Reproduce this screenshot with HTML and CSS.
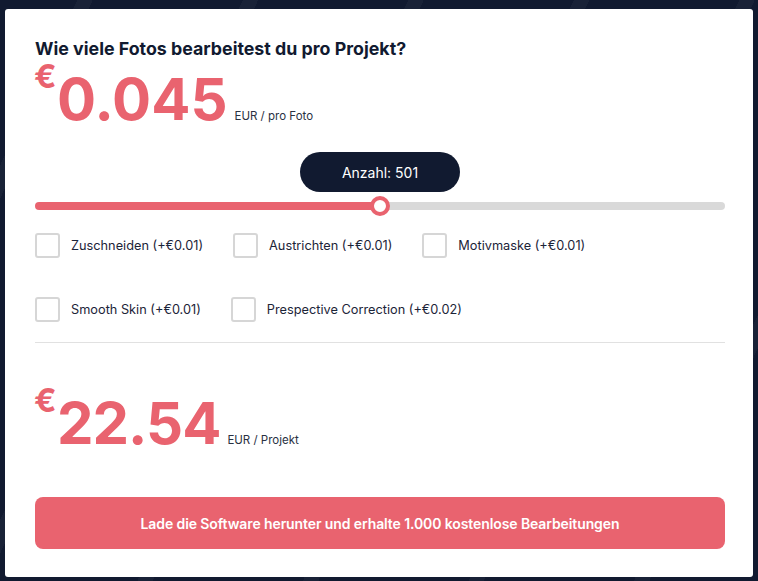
FILE: index.html
```html
<!DOCTYPE html>
<html lang="de">
<head>
<meta charset="utf-8">
<title>Preisrechner</title>
<link rel="stylesheet" href="styles.css">
</head>
<body>
<main class="card">
  <h1 class="title">Wie viele Fotos bearbeitest du pro Projekt?</h1>
  <div class="price">
    <span class="cur">€</span><span class="amount">0.045</span><span class="unit">EUR / pro Foto</span>
  </div>

  <div class="slider">
    <div class="bubble" style="left: 50%">Anzahl: 501</div>
    <div class="track" style="--fill: 50%">
      <span class="thumb" style="left: 50%"></span>
    </div>
  </div>

  <div class="options">
    <label class="opt"><span class="box"></span><span class="lbl">Zuschneiden (+€0.01)</span></label>
    <label class="opt"><span class="box"></span><span class="lbl">Austrichten (+€0.01)</span></label>
    <label class="opt"><span class="box"></span><span class="lbl">Motivmaske (+€0.01)</span></label>
    <label class="opt"><span class="box"></span><span class="lbl">Smooth Skin (+€0.01)</span></label>
    <label class="opt"><span class="box"></span><span class="lbl">Prespective Correction (+€0.02)</span></label>
  </div>

  <hr class="divider">

  <div class="price total">
    <span class="cur">€</span><span class="amount">22.54</span><span class="unit">EUR / Projekt</span>
  </div>

  <button class="cta">Lade die Software herunter und erhalte 1.000 kostenlose Bearbeitungen</button>
</main>
</body>
</html>
```

FILE: styles.css
```css
* { box-sizing: border-box; }

html, body {
  margin: 0;
  height: 100%;
}

body {
  padding: 9px 5px 4px 5px;
  font-family: Inter, "Noto Sans", sans-serif;
  background-color: #111a30;
  background-image: repeating-linear-gradient(115deg, rgba(255,255,255,0) 0 70px, rgba(255,255,255,0.035) 70px 84px, rgba(255,255,255,0) 84px 150px);
}

.card {
  background: #ffffff;
  border-radius: 3px;
  padding: 30px 28px 28px 30px;
  display: flex;
  flex-direction: column;
}

.title {
  margin: 0;
  font-size: 17.8px;
  line-height: 20px;
  font-weight: 700;
  color: #111a30;
  letter-spacing: 0;
}

.price {
  display: flex;
  align-items: baseline;
  margin-top: 3px;
  color: #e9636f;
}

.price .cur {
  align-self: flex-start;
  font-size: 33px;
  line-height: 1;
  font-weight: 700;
  width: 23px;
  margin-top: -2px;
  margin-left: -1px;
}

.price .amount {
  margin-top: 8px;
  font-size: 58px;
  line-height: 1;
  font-weight: 700;
  letter-spacing: 0;
}

.price .unit {
  margin-left: 7px;
  font-size: 11.5px;
  color: #2a3142;
}

.total .amount {
  letter-spacing: -1px;
}

.slider {
  position: relative;
  margin-top: 24px;
  padding-top: 50px;
}

.bubble {
  position: absolute;
  top: 0;
  transform: translateX(-50%);
  width: 160px;
  height: 40px;
  border-radius: 20px;
  background: #111a30;
  color: #ffffff;
  font-size: 14px;
  display: flex;
  align-items: center;
  justify-content: center;
}

.track {
  position: relative;
  height: 8px;
  border-radius: 4px;
  background: linear-gradient(to right, #e9636f var(--fill), #d9d9d9 var(--fill));
}

.thumb {
  position: absolute;
  top: 50%;
  width: 20px;
  height: 20px;
  border-radius: 50%;
  background: #ffffff;
  border: 4px solid #e9636f;
  transform: translate(-50%, -50%);
}

.options {
  margin-top: 23px;
  display: flex;
  flex-wrap: wrap;
  column-gap: 30px;
  row-gap: 39px;
  width: 600px;
}

.opt {
  display: flex;
  align-items: center;
  gap: 11px;
  height: 25px;
}

.box {
  width: 25px;
  height: 25px;
  border: 2px solid #d6d6d6;
  border-radius: 3px;
  background: #fff;
}

.lbl {
  font-size: 12.75px;
  color: #1c2438;
}

.divider {
  margin: 20px 0 0;
  border: 0;
  height: 1px;
  background: #e1e1e1;
}

.total {
  margin-top: 43px;
}

.cta {
  margin-top: 45px;
  height: 52px;
  border: 0;
  border-radius: 8px;
  background: #e9636f;
  color: #ffffff;
  font-family: Inter, "Noto Sans", sans-serif;
  font-size: 14px;
  font-weight: 600;
  letter-spacing: -0.1px;
}
```
